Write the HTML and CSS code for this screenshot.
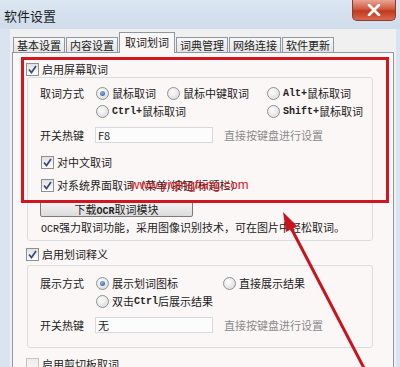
FILE: index.html
```html
<!DOCTYPE html>
<html lang="zh-CN">
<head>
  <meta charset="UTF-8">
  <meta name="viewport" content="width=device-width, initial-scale=1.0">
  <title>软件设置</title>
  <link rel="stylesheet" href="styles.css">
</head>
<body>
  <div class="window">
    <div class="titlebar">
      <span class="title">软件设置</span>
      <span class="close">
        <svg width="14" height="12" viewBox="0 0 14 12"><path d="M2 1 L12 11 M12 1 L2 11" stroke="#fff" stroke-width="2.6" stroke-linecap="round"/></svg>
      </span>
    </div>

    <div class="client">
      <div class="tabs">
        <span class="tab">基本设置</span>
        <span class="tab">内容设置</span>
        <span class="tab active">取词划词</span>
        <span class="tab">词典管理</span>
        <span class="tab">网络连接</span>
        <span class="tab">软件更新</span>
      </div>

      <div class="panel">
        <div class="check-row"><span class="checkbox on"></span>启用屏幕取词</div>
        <div class="group first">
          <div class="mode-grid">
            <span class="label">取词方式</span>
            <span class="opt"><i class="radio on"></i>鼠标取词</span>
            <span class="opt"><i class="radio"></i>鼠标中键取词</span>
            <span class="opt"><i class="radio"></i><span class="en">Alt+</span>鼠标取词</span>
            <span class="label"></span>
            <span class="opt span2"><i class="radio"></i><span class="en">Ctrl+</span>鼠标取词</span>
            <span class="opt"><i class="radio"></i><span class="en">Shift+</span>鼠标取词</span>
          </div>
          <div class="hotkey-row">
            <span class="label">开关热键</span>
            <span class="hotkey">F8</span>
            <span class="hint">直接按键盘进行设置</span>
          </div>
          <div class="check-row sub gap-a"><span class="checkbox on"></span>对中文取词</div>
          <div class="check-row sub gap-b"><span class="checkbox on"></span>对系统界面取词（菜单/按钮/标题栏）</div>
          <div class="button">下载<span class="en">OCR</span>取词模块</div>
          <p class="note"><span class="en">OCR</span>强力取词功能，采用图像识别技术，可在图片中轻松取词。</p>
        </div>

        <div class="check-row gap-c"><span class="checkbox on"></span>启用划词释义</div>
        <div class="group second">
          <div class="show-grid">
            <span class="label">展示方式</span>
            <span class="opt"><i class="radio on"></i>展示划词图标</span>
            <span class="opt"><i class="radio"></i>直接展示结果</span>
            <span class="label"></span>
            <span class="opt"><i class="radio"></i>双击<span class="en">Ctrl</span>后展示结果</span>
            <span></span>
          </div>
          <div class="hotkey-row">
            <span class="label">开关热键</span>
            <span class="hotkey">无</span>
            <span class="hint">直接按键盘进行设置</span>
          </div>
        </div>

        <div class="check-row gap-d"><span class="checkbox off"></span>启用剪切板取词</div>
      </div>
    </div>

    <div class="highlight"></div>
    <div class="watermark">www.yiqingfang.com</div>
    <svg class="arrow" width="400" height="367" viewBox="0 0 400 367">
      <path d="M365 370 L289 224" stroke="#c8151d" stroke-width="3"/>
      <polygon points="283,212 297,226 286,232" fill="#c8151d"/>
    </svg>
  </div>
</body>
</html>
```

FILE: styles.css
```css
body {
  margin: 0;
  font-family: "Noto Sans CJK SC", sans-serif;
  font-size: 11px;
  color: #222;
  background: #d9e4f0;
  overflow: hidden;
}

.window {
  position: relative;
  width: 400px;
  height: 367px;
  overflow: hidden;
}

.titlebar {
  height: 29px;
  display: flex;
  justify-content: space-between;
  background: linear-gradient(to bottom, #dbe6f2, #cfdcea);
}

.title {
  font-size: 13px;
  line-height: 13px;
  padding: 9px 0 0 4px;
  color: #1b1b1b;
}

.close {
  width: 42px;
  height: 20px;
  margin-right: 4px;
  display: flex;
  align-items: center;
  justify-content: center;
  border: 1px solid #8d3b2c;
  border-top: none;
  border-radius: 0 0 5px 5px;
  background: linear-gradient(to bottom, #e9a592, #cf5a42 45%, #c2381f 55%, #d9694e);
}

.client {
  margin: 0 4px 0 10px;
  height: 338px;
  padding-top: 4px;
  background: #f0f0f0;
}

.tabs {
  display: flex;
  align-items: flex-end;
  height: 19px;
  padding-left: 3px;
}

.tab {
  width: 50px;
  height: 14px;
  margin-right: 1px;
  line-height: 14px;
  text-align: center;
  border: 1px solid #8e98a4;
  border-bottom: none;
  background: linear-gradient(to bottom, #f8f8f8, #e4e4e4);
}

.tab.active {
  width: 54px;
  height: 20px;
  line-height: 18px;
  margin-bottom: -1px;
  position: relative;
  background: #fbf7f7;
}

.panel {
  margin: 0 2px;
  height: 320px;
  padding: 8px 0 0 13px;
  border: 1px solid #8e98a4;
  background: #fbf7f7;
}

.check-row {
  display: flex;
  align-items: center;
  height: 16px;
  line-height: 16px;
  white-space: nowrap;
}

.check-row.sub {
  margin-left: 1px;
}

.gap-a { margin-top: 10px; }
.gap-b { margin-top: 7px; }
.gap-c { margin-top: 5px; }
.gap-d { margin-top: 8px; }

.checkbox {
  width: 11px;
  height: 11px;
  margin-right: 3px;
  border: 1px solid #8f8f8f;
  background: linear-gradient(to bottom, #e2e2e2, #fdfdfd);
  flex: none;
}

.checkbox.on {
  background: url("data:image/svg+xml,%3Csvg xmlns='http://www.w3.org/2000/svg' width='11' height='11'%3E%3Cpath d='M2 5.5 L4.5 8.5 L9 2' stroke='%23344b7c' stroke-width='1.7' fill='none'/%3E%3C/svg%3E"), linear-gradient(to bottom, #e2e2e2, #fdfdfd);
}

.checkbox.off {
  border-color: #c4c4c4;
  background: linear-gradient(to bottom, #ececec, #f8f8f8);
}

.group {
  margin-left: 1px;
  width: 346px;
  border: 1px solid #d9dde2;
  border-radius: 3px;
  padding-left: 12px;
  box-sizing: border-box;
}

.group.first {
  padding-top: 6px;
  padding-bottom: 2px;
}

.group.second {
  margin-top: 3px;
  padding-top: 8px;
  padding-bottom: 13px;
}

.mode-grid {
  display: grid;
  grid-template-columns: 56px 71px 100px auto;
  grid-auto-rows: 18px;
  align-items: center;
}

.show-grid {
  display: grid;
  grid-template-columns: 56px 127px auto;
  grid-auto-rows: 18px;
  align-items: center;
}

.span2 {
  grid-column: span 2;
}

.opt {
  display: flex;
  align-items: center;
  white-space: nowrap;
}

.radio {
  width: 11px;
  height: 11px;
  margin-right: 3px;
  border: 1px solid #8f9296;
  border-radius: 50%;
  background: radial-gradient(circle at 40% 35%, #ffffff, #d4d4d4);
  flex: none;
  display: flex;
  align-items: center;
  justify-content: center;
}

.radio.on::after {
  content: '';
  width: 5px;
  height: 5px;
  border-radius: 50%;
  background: radial-gradient(circle at 40% 35%, #8fb7ea, #1e4f99);
}

.en {
  font-family: "Liberation Mono", monospace;
  font-size: 10px;
  font-weight: bold;
}

.hotkey-row {
  display: flex;
  align-items: center;
  height: 18px;
  margin-top: 6px;
}

.hotkey-row .label {
  width: 55px;
}

.hotkey {
  width: 114px;
  height: 14px;
  line-height: 14px;
  padding-left: 2px;
  border: 1px solid #d6d9dd;
  background: #fdfcfc;
}

.hint {
  margin-left: 11px;
  color: #8a8a8a;
}

.button {
  width: 151px;
  height: 14px;
  line-height: 14px;
  margin-top: 8px;
  text-align: center;
  border: 1px solid #7b7b7b;
  border-radius: 2px;
  background: linear-gradient(to bottom, #f3f3f3, #dcdcdc);
}

.note {
  margin: 2px 0 0 1px;
  line-height: 16px;
  white-space: nowrap;
}

.note .en {
  font-weight: normal;
}

.highlight {
  position: absolute;
  left: 21px;
  top: 57px;
  width: 362px;
  height: 140px;
  border: 3px solid #d2161f;
}

.watermark {
  position: absolute;
  left: 130px;
  top: 177px;
  font-family: "Liberation Sans", sans-serif;
  font-size: 13px;
  line-height: 16px;
  color: #e0141c;
}

.arrow {
  position: absolute;
  left: 0;
  top: 0;
}
```
